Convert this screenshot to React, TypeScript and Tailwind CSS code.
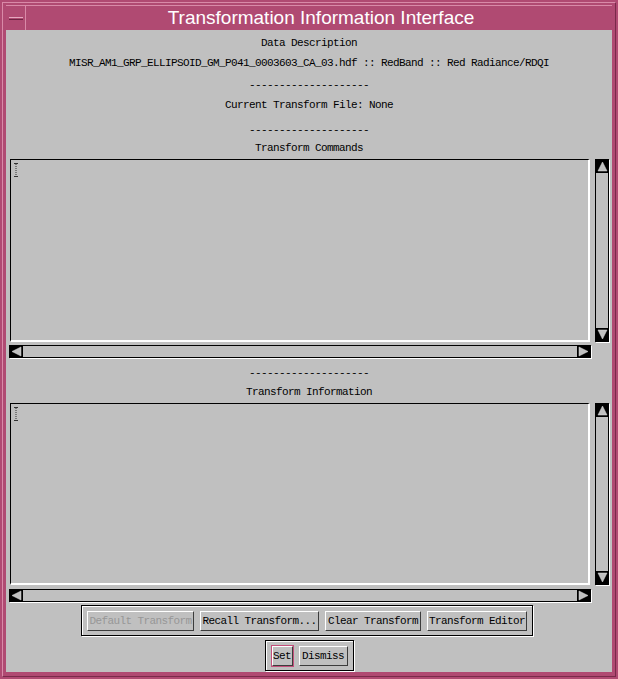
import React from "react";

const mono = { fontFamily: '"Liberation Mono", "DejaVu Sans Mono", monospace' };

function Arrow({ dir }: { dir: "up" | "down" | "left" | "right" }) {
  const pts: Record<string, string> = {
    up: "6.5,2 11,11 2,11",
    down: "2,2 11,2 6.5,11",
    left: "2,6.5 11,2 11,11",
    right: "2,2 11,6.5 2,11",
  };
  return (
    <svg width="13" height="13" viewBox="0 0 13 13" className="block shrink-0">
      <rect x="0" y="0" width="13" height="13" fill="#000" />
      <polygon points={pts[dir]} fill="#c0c0c0" stroke="#e0e0e0" strokeWidth="0.5" />
    </svg>
  );
}

function IBeam() {
  return (
    <svg width="6" height="14" viewBox="0 0 6 14" className="block">
      <line x1="1" y1="0.5" x2="5" y2="0.5" stroke="#333" strokeWidth="1" />
      <line x1="1" y1="13.5" x2="5" y2="13.5" stroke="#333" strokeWidth="1" />
      <line x1="3" y1="1" x2="3" y2="13" stroke="#333" strokeWidth="1" strokeDasharray="1 1" />
    </svg>
  );
}

function ScrolledText({ h }: { h: number }) {
  return (
    <div className="flex flex-col">
      <div className="flex">
        <div
          className="ml-[4px] w-[580px] border-t border-l border-t-black border-l-black border-b-2 border-r-2 border-b-white border-r-white bg-[#c0c0c0] pl-[2px] pt-[3px]"
          style={{ height: h }}
        >
          <IBeam />
        </div>
        <div
          className="ml-[5px] w-[14px] flex flex-col justify-between border border-black shadow-[1px_1px_0_#fff] bg-[#c0c0c0]"
          style={{ height: h }}
        >
          <Arrow dir="up" />
          <Arrow dir="down" />
        </div>
      </div>
    </div>
  );
}

function HBar({ mt }: { mt: number }) {
  return (
    <div
      className="ml-[3px] w-[582px] h-[13px] flex justify-between border border-black shadow-[1px_1px_0_#fff] bg-[#c0c0c0] box-border"
      style={{ marginTop: mt }}
    >
      <div className="-mt-px"><Arrow dir="left" /></div>
      <div className="-mt-px"><Arrow dir="right" /></div>
    </div>
  );
}

function Btn({ label, w, disabled, def }: { label: string; w: number; disabled?: boolean; def?: boolean }) {
  const inner = (
    <div
      className={`h-[20px] flex items-center justify-center pt-[1px] border-t border-l border-t-white border-l-white border-b border-r border-b-[#3c3c3c] border-r-[#3c3c3c] bg-[#c0c0c0] text-[11px] tracking-[-0.6px] leading-none ${
        disabled ? "text-[#979797]" : "text-black"
      }`}
      style={{ ...mono, width: def ? w - 2 : w }}
    >
      {label}
    </div>
  );
  if (def) {
    return <div className="border border-[#c4507c]">{inner}</div>;
  }
  return inner;
}

function Label({ children, mt }: { children: React.ReactNode; mt: number }) {
  return (
    <div
      className="h-[13px] pt-[2px] leading-[11px] text-center text-[11px] tracking-[-0.6px] text-black whitespace-pre"
      style={{ ...mono, marginTop: mt }}
    >
      {children}
    </div>
  );
}

export default function App() {
  const dashes = "--------------------";
  return (
    <div className="w-[618px] h-[679px] bg-[#b04a72] p-[2px]">
      <div className="w-full h-full border-t border-l border-t-[#d98aa8] border-l-[#d98aa8] border-b border-r border-b-[#7a2a4a] border-r-[#7a2a4a] pt-[2px] px-[3px] pb-[4px] flex flex-col">
        {/* title bar */}
        <div className="h-[25px] flex shrink-0 border-t border-t-[#d98aa8]">
          <div className="w-[20px] h-full flex items-center justify-center border-r border-r-[#d98aa8]">
            <div className="w-[14px] h-[3px] bg-[#b04a72] border-t border-t-[#e6a8c0] border-b border-b-[#6e2342]" />
          </div>
          <div
            className="flex-1 flex items-center justify-center text-white text-[19px] leading-none pb-[1px] pl-[4px]"
            style={{ fontFamily: '"Liberation Sans", Arial, sans-serif' }}
          >
            Transformation Information Interface
          </div>
        </div>
        {/* content */}
        <div className="flex-1 bg-[#c0c0c0] flex flex-col">
          <Label mt={6}>Data Description</Label>
          <Label mt={7}>MISR_AM1_GRP_ELLIPSOID_GM_P041_0003603_CA_03.hdf :: RedBand :: Red Radiance/RDQI</Label>
          <Label mt={9}>{dashes}</Label>
          <Label mt={7}>Current Transform File: None</Label>
          <Label mt={12}>{dashes}</Label>
          <Label mt={5}>Transform Commands</Label>
          <div className="mt-[5px]">
            <ScrolledText h={183} />
          </div>
          <HBar mt={3} />
          <Label mt={8}>{dashes}</Label>
          <Label mt={6}>Transform Information</Label>
          <div className="mt-[5px]">
            <ScrolledText h={182} />
          </div>
          <HBar mt={4} />
          <div className="mt-[3px] flex justify-center">
            <div className="ml-[-4px] h-[31px] border border-black shadow-[1px_1px_0_#fff,inset_1px_1px_0_#fff] flex items-center gap-[6px] px-[5px]">
              <Btn label="Default Transform" w={107} disabled />
              <Btn label="Recall Transform..." w={119} />
              <Btn label="Clear Transform" w={96} />
              <Btn label="Transform Editor" w={100} />
            </div>
          </div>
          <div className="mt-[4px] flex justify-center">
            <div className="h-[31px] border border-black shadow-[1px_1px_0_#fff,inset_1px_1px_0_#fff] flex items-center gap-[5px] px-[5px]">
              <Btn label="Set" w={23} def />
              <Btn label="Dismiss" w={49} />
            </div>
          </div>
        </div>
      </div>
    </div>
  );
}
